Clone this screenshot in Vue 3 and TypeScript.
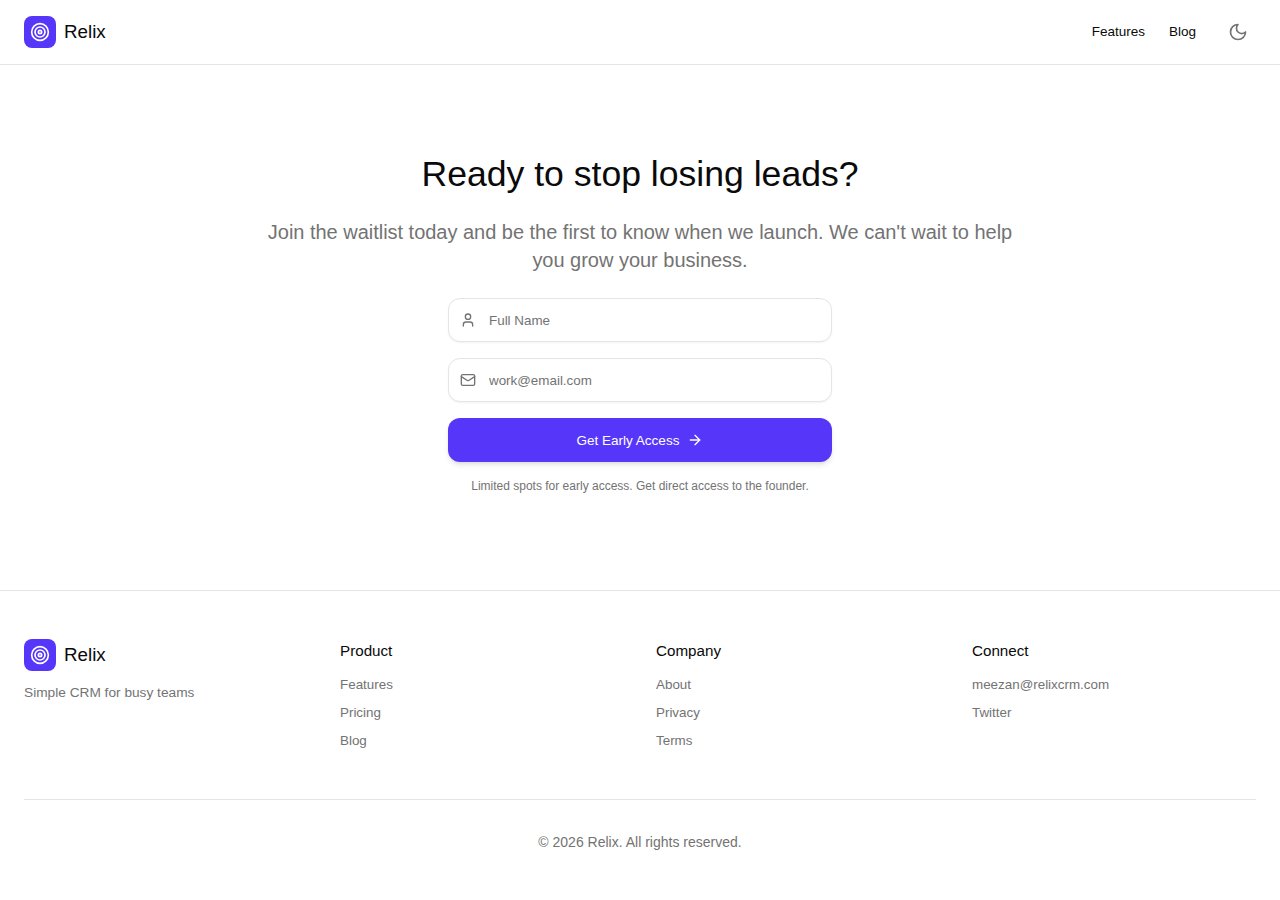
<template>
  <div class="page">
    <header class="topbar">
      <div class="brand">
        <span class="logo">
          <svg width="20" height="20" viewBox="0 0 24 24" fill="none" stroke="#fff" stroke-width="2"><circle cx="12" cy="12" r="10" /><circle cx="12" cy="12" r="6" /><circle cx="12" cy="12" r="2" /></svg>
        </span>
        <span class="brand-name">Relix</span>
      </div>
      <nav class="nav">
        <a class="nav-link">Features</a>
        <a class="nav-link">Blog</a>
        <button class="theme-btn" aria-label="Toggle theme">
          <svg width="20" height="20" viewBox="0 0 24 24" fill="none" stroke="currentColor" stroke-width="2" stroke-linecap="round" stroke-linejoin="round"><path d="M12 3a6 6 0 0 0 9 9 9 9 0 1 1-9-9Z" /></svg>
        </button>
      </nav>
    </header>

    <main class="hero">
      <h1>Ready to stop losing leads?</h1>
      <p class="lead">Join the waitlist today and be the first to know when we launch. We can't wait to help you grow your business.</p>
      <form class="form" @submit.prevent>
        <label class="field">
          <svg width="16" height="16" viewBox="0 0 24 24" fill="none" stroke="currentColor" stroke-width="2" stroke-linecap="round" stroke-linejoin="round"><path d="M19 21v-2a4 4 0 0 0-4-4H9a4 4 0 0 0-4 4v2" /><circle cx="12" cy="7" r="4" /></svg>
          <input type="text" placeholder="Full Name" />
        </label>
        <label class="field">
          <svg width="16" height="16" viewBox="0 0 24 24" fill="none" stroke="currentColor" stroke-width="2" stroke-linecap="round" stroke-linejoin="round"><rect x="2" y="4" width="20" height="16" rx="2" /><path d="m22 7-8.97 5.7a1.94 1.94 0 0 1-2.06 0L2 7" /></svg>
          <input type="email" placeholder="work@email.com" />
        </label>
        <button class="submit" type="submit">
          Get Early Access
          <svg width="16" height="16" viewBox="0 0 24 24" fill="none" stroke="currentColor" stroke-width="2" stroke-linecap="round" stroke-linejoin="round"><path d="M5 12h14" /><path d="m12 5 7 7-7 7" /></svg>
        </button>
      </form>
      <p class="note">Limited spots for early access. Get direct access to the founder.</p>
    </main>

    <footer class="footer">
      <div class="columns">
        <div>
          <div class="brand">
            <span class="logo">
              <svg width="20" height="20" viewBox="0 0 24 24" fill="none" stroke="#fff" stroke-width="2"><circle cx="12" cy="12" r="10" /><circle cx="12" cy="12" r="6" /><circle cx="12" cy="12" r="2" /></svg>
            </span>
            <span class="brand-name">Relix</span>
          </div>
          <p class="tagline">Simple CRM for busy teams</p>
        </div>
        <div v-for="col in columns" :key="col.title">
          <h3>{{ col.title }}</h3>
          <ul>
            <li v-for="link in col.links" :key="link">{{ link }}</li>
          </ul>
        </div>
      </div>
      <div class="copyright">© 2026 Relix. All rights reserved.</div>
    </footer>
  </div>
</template>

<script setup lang="ts">
const columns: { title: string; links: string[] }[] = [
  { title: 'Product', links: ['Features', 'Pricing', 'Blog'] },
  { title: 'Company', links: ['About', 'Privacy', 'Terms'] },
  { title: 'Connect', links: ['meezan@relixcrm.com', 'Twitter'] },
]
</script>

<style>
body {
  background: #fff;
}
</style>

<style scoped>
.page {
  font-family: "Liberation Sans", Arial, sans-serif;
  color: #0a0a0a;
  background: #fff;
  min-height: 900px;
}
.topbar {
  height: 64px;
  padding: 0 24px;
  display: flex;
  align-items: center;
  justify-content: space-between;
  border-bottom: 1px solid #e5e5e5;
}
.brand {
  display: flex;
  align-items: center;
  gap: 8px;
}
.logo {
  width: 32px;
  height: 32px;
  border-radius: 8px;
  background: #5637fa;
  display: flex;
  align-items: center;
  justify-content: center;
}
.brand-name {
  font-size: 18.8px;
  line-height: 28px;
}
.nav {
  display: flex;
  align-items: center;
  gap: 24px;
}
.nav-link {
  font-size: 13.5px;
  line-height: 20px;
}
.theme-btn {
  width: 36px;
  height: 36px;
  padding: 0;
  border: none;
  background: none;
  color: #737373;
  display: flex;
  align-items: center;
  justify-content: center;
}
.hero {
  height: 525px;
  box-sizing: border-box;
  padding-top: 89px;
  display: flex;
  flex-direction: column;
  align-items: center;
  text-align: center;
}
h1 {
  margin: 0;
  font-size: 35.6px;
  line-height: 40px;
  font-weight: 400;
}
.lead {
  width: 768px;
  margin: 24px 0 0;
  font-size: 20px;
  line-height: 28px;
  letter-spacing: -0.02px;
  color: #737373;
}
.form {
  width: 384px;
  margin-top: 24px;
  display: flex;
  flex-direction: column;
  gap: 16px;
}
.field {
  height: 44px;
  box-sizing: border-box;
  display: flex;
  align-items: center;
  gap: 13px;
  padding: 0 11px;
  border: 1px solid #e5e5e5;
  border-radius: 12px;
  background: #fff;
  box-shadow: 0 1px 2px rgba(0, 0, 0, 0.05);
  color: #737373;
}
.field input {
  flex: 1;
  min-width: 0;
  border: none;
  outline: none;
  padding: 0;
  background: transparent;
  font: inherit;
  font-size: 13.4px;
  color: #0a0a0a;
}
.field input::placeholder {
  color: #737373;
}
.submit {
  height: 44px;
  border: none;
  border-radius: 12px;
  background: #5637fa;
  color: #fff;
  font: inherit;
  font-size: 13.5px;
  display: flex;
  align-items: center;
  justify-content: center;
  gap: 8px;
  box-shadow: 0 4px 6px -1px rgba(0, 0, 0, 0.1), 0 2px 4px -2px rgba(0, 0, 0, 0.1);
}
.note {
  margin: 16px 0 0;
  font-size: 12px;
  line-height: 16px;
  color: #737373;
}
.footer {
  border-top: 1px solid #e5e5e5;
  padding: 48px 24px 0;
}
.columns {
  display: grid;
  grid-template-columns: repeat(4, 1fr);
  gap: 32px;
  padding-bottom: 48px;
  border-bottom: 1px solid #e5e5e5;
}
.tagline {
  margin: 12px 0 0;
  font-size: 13.7px;
  line-height: 20px;
  color: #737373;
}
h3 {
  margin: 0;
  font-size: 15.2px;
  line-height: 24px;
  font-weight: 400;
}
ul {
  list-style: none;
  margin: 12px 0 0;
  padding: 0;
  display: flex;
  flex-direction: column;
  gap: 8px;
}
li {
  font-size: 13.4px;
  line-height: 20px;
  color: #737373;
}
.copyright {
  margin-top: 32px;
  font-size: 14px;
  line-height: 20px;
  text-align: center;
  color: #737373;
}
</style>
